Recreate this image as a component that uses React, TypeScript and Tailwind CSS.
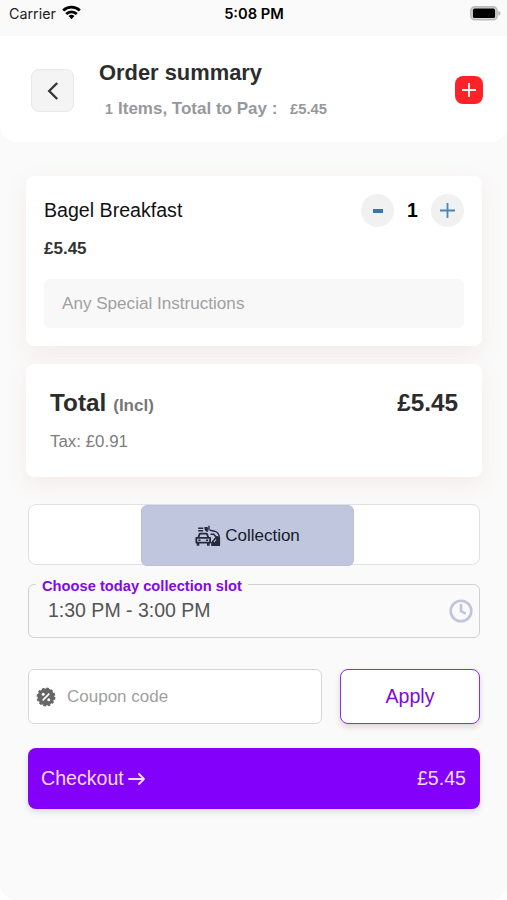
import React from 'react';

const ORDER = {
  count: 1,
  name: 'Bagel Breakfast',
  price: '£5.45',
  tax: '£0.91',
  slot: '1:30 PM - 3:00 PM',
};

const WifiIcon = () => (
  <svg width="19" height="15" viewBox="0 0 19 15" fill="none" stroke="#000" strokeWidth="2.8">
    <path d="M1.2 5.4a12 12 0 0 1 16.6 0" />
    <path d="M4.2 9a7.6 7.6 0 0 1 10.6 0" />
    <path d="M9.5 14.2 6.500 11.1a4.3 4.3 0 0 1 6 0Z" fill="#000" stroke="none" />
  </svg>
);

const BatteryIcon = () => (
  <svg width="31" height="16" viewBox="0 0 31 16">
    <rect x="0.9" y="0.9" width="26.2" height="12.8" rx="3.8" fill="#d8d8d8" stroke="#bcbcbc" strokeWidth="1.6" />
    <rect x="2.9" y="2.6" width="22.2" height="9.4" rx="1.6" fill="#000" />
    <path d="M28.4 5c1.400.4 2 1.300 2 2.300s-.6 1.900-2 2.300Z" fill="#b0b0b0" />
  </svg>
);

const CarIcon = () => (
  <svg width="26" height="22" viewBox="0 0 26 22" fill="none" stroke="#252b3d" strokeWidth="1.8" strokeLinejoin="round">
    <path d="M3.200 12.800 4.800 8.700h7l1.700 4.100" />
    <path d="M1.300 12.800h13.800v4.800H1.300z" />
    <path d="M3 17.800v3M13.300 17.800v3" strokeWidth="2.600" />
    <path d="M3.300 15.200h2.200M10.900 15.200h2.200" strokeWidth="1.400" />
    <path d="M3.200 3.300h5M3.200 5.700h5" strokeWidth="1.500" />
    <path d="M10 2.800h2.200v3.400L10.600 5zM14 .8v4.600" fill="#252b3d" strokeWidth="1.400" />
    <path d="M15 5.300 19.500 6.200c3 .9 4.700 3.200 4.900 6.300" strokeWidth="1.400" />
    <path d="M15.500 9.200h3.200l2.500 2.800" strokeWidth="1.600" />
    <path d="M16.800 17.300 21.800 11.500l2.700 1v7.900h-7.700z" fill="#252b3d" strokeWidth="1.200" />
    <path d="m18.900 17 2.200-2.400" stroke="#bfc6de" strokeWidth="1.100" />
  </svg>
);

const DiscountIcon = () => (
  <svg width="20" height="20" viewBox="0 0 20 20">
    <circle cx="10" cy="10" r="8.400" fill="#666" />
    <circle cx="10" cy="10" r="8.600" fill="none" stroke="#666" strokeWidth="1.700" strokeDasharray="2.700 1.800" />
    <path d="M6.700 13.300 13.300 6.700" stroke="#fff" strokeWidth="1.700" />
    <circle cx="7.200" cy="7.300" r="1.500" fill="#fff" />
    <circle cx="12.800" cy="12.700" r="1.500" fill="#fff" />
  </svg>
);

const StatusBar = () => (
  <div className="flex h-9 items-start justify-between pl-[9px] pr-[6px] font-[Inter,sans-serif] text-black">
    <div className="flex w-[149px] items-start gap-[6px] pt-[4px]">
      <span className="text-[14.3px] leading-5 text-[#222]">Carrier</span>
      <span className="pt-[1px]"><WifiIcon /></span>
    </div>
    <span className="pt-[4px] text-[14.7px] font-semibold leading-5">5:08 PM</span>
    <div className="flex w-[151px] justify-end pt-[6px]">
      <BatteryIcon />
    </div>
  </div>
);

const Header = () => (
  <header className="flex h-[106px] items-start rounded-b-2xl bg-white pl-[31px] pr-6">
    <button className="mt-[33px] flex size-[43px] items-center justify-center rounded-lg border border-[#e8e8e8] bg-[#f4f4f4]">
      <svg width="12" height="18" viewBox="0 0 12 18" fill="none" stroke="#333" strokeWidth="2.300">
        <path d="M10.200 1 2.200 9l8 8" />
      </svg>
    </button>
    <div className="ml-[25px] flex-1 pt-[23px]">
      <h1 className="text-[21.9px] font-bold leading-7 text-[#2c2c2c]">Order summary</h1>
      <p className="flex items-baseline pl-[6px] pt-[10px] text-[17px] font-bold leading-6 text-[#96989c]">
        <span className="w-[13px] text-[14px]">{ORDER.count}</span>
        <span className="w-[172px]">Items, Total to Pay :</span>
        <span className="text-[14.800px]">{ORDER.price}</span>
      </p>
    </div>
    <button className="mt-[40px] flex size-[28px] items-center justify-center rounded-lg bg-[#ff2329]">
      <svg width="14" height="14" viewBox="0 0 14 14" stroke="#fff" strokeWidth="1.800">
        <path d="M7 0v14M0 7h14" />
      </svg>
    </button>
  </header>
);

const ItemCard = () => (
  <section className="h-[170px] rounded-lg bg-white px-[18px] pt-[17px] shadow-[0_8px_22px_rgba(190,120,100,0.10)]">
    <div className="flex h-[34px] items-center">
      <h2 className="flex-1 pt-[2px] text-[19.600px] text-[#111]">{ORDER.name}</h2>
      <button className="flex size-[33px] items-center justify-center rounded-full bg-[#f1f1f2]">
        <span className="mt-[2px] h-[4px] w-[10px] bg-[#3478ad]" />
      </button>
      <span className="w-[37px] pt-[1px] text-center text-[19.500px] font-bold text-black">{ORDER.count}</span>
      <button className="flex size-[33px] items-center justify-center rounded-full bg-[#f1f1f2]">
        <svg width="15" height="15" viewBox="0 0 15 15" stroke="#4387bd" strokeWidth="1.800">
          <path d="M7.500 0v15M0 7.500h15" />
        </svg>
      </button>
    </div>
    <p className="pt-[10px] text-[17px] font-bold leading-6 text-[#333]">{ORDER.price}</p>
    <div className="mt-[18px] flex h-[49px] items-center rounded-md bg-[#f8f8f8] pl-[18px] text-[17.100px] text-[#a0a0a0]">
      Any Special Instructions
    </div>
  </section>
);

const TotalCard = () => (
  <section className="mt-[18px] h-[113px] rounded-lg bg-white px-[24px] pt-[23px] shadow-[0_8px_22px_rgba(190,120,100,0.10)]">
    <div className="flex items-baseline text-[24.300px] font-bold leading-8 text-[#2c2c2c]">
      <span>Total</span>
      <span className="ml-[7px] flex-1 text-[17px] text-[#777]">(Incl)</span>
      <span>{ORDER.price}</span>
    </div>
    <p className="pt-[8px] text-[16.900px] leading-6 text-[#7d7d7d]">Tax: {ORDER.tax}</p>
  </section>
);

const App: React.FC = () => {
  return (
    <div className="h-[900px] w-[507px] overflow-hidden bg-white font-['Liberation_Sans',Arial,sans-serif]">
      <div className="h-full rounded-b-2xl bg-[#fafafa]">
        <StatusBar />
        <Header />
        <main className="pt-[34px]">
          <div className="pl-[26px] pr-[25px]">
            <ItemCard />
            <TotalCard />
          </div>
          <div className="pl-[28px] pr-[27px] pt-[27px]">
            <div className="flex h-[61px] justify-center rounded-lg border border-[#e0e1e4] bg-white pr-[13px]">
              <button className="flex h-[61px] w-[213px] items-center justify-center gap-[4px] rounded-md border border-[#b9c1da] bg-[#bfc6de] text-[17px] text-[#171c2b]">
                <CarIcon />
                <span>Collection</span>
              </button>
            </div>
            <fieldset className="mt-[8px] h-[65px] rounded-md border border-[#d0d1d3] pl-[7px] pr-[5px]">
              <legend className="px-[6px] pt-[4px] text-[14.700px] font-bold leading-[18px] text-[#8208e8]">Choose today collection slot</legend>
              <div className="flex h-[31px] items-center justify-between pl-[12px]">
                <span className="pt-[1px] text-[19.500px] text-[#555]">{ORDER.slot}</span>
                <svg width="26" height="26" viewBox="0 0 26 26" fill="none" stroke="#c1c4dd" strokeWidth="2.600" strokeLinecap="round">
                  <circle cx="13" cy="13" r="10.300" />
                  <path d="M13 7v6.200l3.800 2" />
                </svg>
              </div>
            </fieldset>
            <div className="mt-[31px] flex h-[55px] gap-[18px]">
              <div className="flex h-[55px] w-[294px] items-center rounded-md border border-[#d8d8d8] bg-white pl-[7px]">
                <DiscountIcon />
                <span className="ml-[11px] text-[17px] text-[#a0a0a0]">Coupon code</span>
              </div>
              <button className="h-[55px] flex-1 rounded-lg border-[1.500px] border-[#8c2be8] bg-white pt-[1px] text-[19.600px] text-[#7e0bdc] shadow-[0_3px_6px_rgba(0,0,0,0.14)]">
                Apply
              </button>
            </div>
            <button className="mt-[24px] flex h-[61px] w-full items-center rounded-lg bg-[#8300fa] pl-[13px] pr-[14px] text-[19.600px] text-[#f5dcff] shadow-[0_3px_6px_rgba(0,0,0,0.12)]">
              <span className="pt-[1px]">Checkout</span>
              <svg className="ml-[4px]" width="17" height="14" viewBox="0 0 17 14" fill="none" stroke="#f5dcff" strokeWidth="1.800" strokeLinecap="round" strokeLinejoin="round">
                <path d="M1 7h15M11 2l5 5-5 5" />
              </svg>
              <span className="ml-auto pt-[1px]">{ORDER.price}</span>
            </button>
          </div>
        </main>
      </div>
    </div>
  );
};

export default App;
